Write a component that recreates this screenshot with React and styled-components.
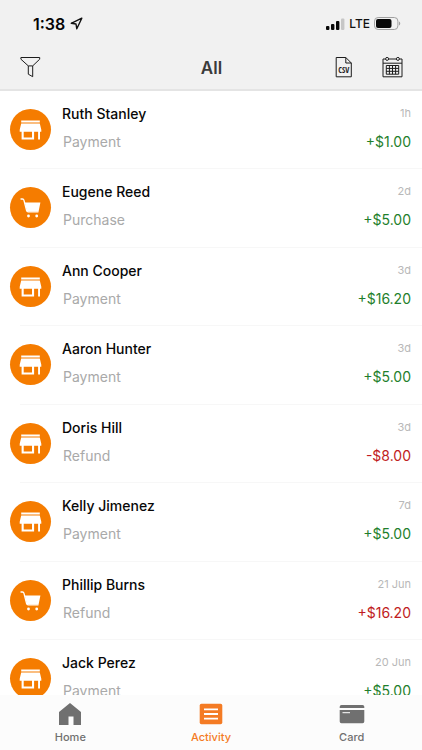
import React from "react";
import styled, { createGlobalStyle } from "styled-components";

const GlobalStyle = createGlobalStyle`
  *, *::before, *::after { box-sizing: border-box; }
  body {
    margin: 0;
    background: #fff;
    font-family: Inter, Roboto, "Liberation Sans", sans-serif;
    -webkit-font-smoothing: antialiased;
  }
  h1, h2, p, ul { margin: 0; padding: 0; }
  button { border: 0; padding: 0; background: none; color: inherit; font: inherit; cursor: pointer; }
  svg { display: block; }
`;

const Screen = styled.div`
  display: flex;
  flex-direction: column;
  height: 100vh;
`;

const Header = styled.header`
  flex: none;
  background: #f1f1f1;
  border-bottom: 2px solid #e4e4e4;
`;

const StatusBar = styled.div`
  display: flex;
  justify-content: space-between;
  align-items: center;
  height: 47px;
  padding: 0 21px 0 33px;
`;

const StatusGroup = styled.div`
  display: flex;
  align-items: center;
  gap: ${({ $gap }) => $gap}px;
`;

const Clock = styled.time`
  font-size: 16px;
  line-height: 20px;
  font-weight: 600;
  color: #050505;
`;

const Network = styled.span`
  font-size: 12px;
  line-height: 16px;
  font-weight: 500;
  color: #111;
`;

const TitleBar = styled.div`
  display: grid;
  grid-template-columns: 1fr auto 1fr;
  align-items: center;
  height: 42px;
  padding: 0 19px 0 20px;
`;

const Title = styled.h1`
  font-size: 17px;
  line-height: 24px;
  font-weight: 600;
  color: #3a3a3a;
`;

const Actions = styled.div`
  display: flex;
  justify-content: flex-end;
  gap: 30px;
`;

const IconButton = styled.button`
  display: block;
  justify-self: start;
`;

const List = styled.ul`
  flex: 1;
  min-height: 0;
  overflow-y: auto;
  scrollbar-width: none;
  list-style: none;
`;

const Row = styled.li`
  display: flex;
  gap: 11px;
  height: 78px;
  margin-left: 20px;
  border-bottom: 1px solid #f7f7f7;
  &:nth-child(even) { height: 79px; }
`;

const Avatar = styled.span`
  flex: none;
  display: grid;
  place-items: center;
  width: 41px;
  height: 41px;
  margin: 18px 0 0 -10px;
  border-radius: 50%;
  background: #f57c00;
`;

const RowBody = styled.div`
  flex: 1;
  display: grid;
  grid-template-columns: 1fr auto;
  grid-template-rows: 20px 20px;
  row-gap: 8px;
  padding: 13px 11px 0 0;
`;

const Name = styled.h2`
  font-size: 14px;
  line-height: 20px;
  font-weight: 500;
  color: #080808;
`;

const When = styled.span`
  font-size: 11px;
  line-height: 18px;
  text-align: right;
  color: #b8b8b8;
`;

const Kind = styled.p`
  padding-left: 1px;
  font-size: 14px;
  line-height: 20px;
  color: #a9a9a9;
`;

const Amount = styled.span`
  font-size: 14px;
  line-height: 20px;
  font-weight: 400;
  text-align: right;
  color: ${({ $negative }) => ($negative ? "#c01c22" : "#1f7f2c")};
`;

const TabBar = styled.nav`
  flex: none;
  display: grid;
  grid-template-columns: repeat(3, 1fr);
  height: 55px;
  background: #fcfcfc;
`;

const Tab = styled.button`
  && {
    display: flex;
    flex-direction: column;
    align-items: center;
    gap: 3px;
    padding-top: 6px;
    font-size: 11px;
    line-height: 14px;
    font-weight: 500;
    color: ${({ $active }) => ($active ? "#f47b24" : "#707070")};
  }
`;

const LocationIcon = () => (
  <svg width="13" height="13" viewBox="0 0 13 13" fill="none" stroke="#111" strokeWidth="1.4" strokeLinejoin="round" aria-hidden="true">
    <path d="M11.8 1.2 1.2 6.3 6 7l.8 4.8z" />
  </svg>
);

const SignalIcon = () => (
  <svg width="19" height="12" viewBox="0 0 19 12" aria-label="Signal strength">
    <rect x="0" y="8" width="3.4" height="4" rx="1" fill="#080808" />
    <rect x="5" y="6" width="3.4" height="6" rx="1" fill="#080808" />
    <rect x="10" y="3" width="3.4" height="9" rx="1" fill="#080808" />
    <rect x="15" y="0.5" width="3.4" height="11.5" rx="1" fill="#c6c6c6" />
  </svg>
);

const BatteryIcon = () => (
  <svg width="27" height="13" viewBox="0 0 27 13" aria-label="Battery">
    <rect x="0.5" y="0.5" width="23.4" height="12" rx="3.6" fill="none" stroke="#a0a0a0" />
    <rect x="2" y="2" width="15.5" height="9" rx="2" fill="#080808" />
    <path d="M25 4.4c1.7.7 1.7 3.5 0 4.2z" fill="#a0a0a0" />
  </svg>
);

const FilterIcon = () => (
  <svg width="21" height="22" viewBox="0 1 21 22" fill="none" stroke="#1c1c1c" strokeWidth="1" strokeLinejoin="round" aria-hidden="true">
    <path d="M.9 1.5h18.8v1.7l-7 6.7v10.8l-4.400-2.5V9.900L.9 3.200z" />
    <path d="M8.300 9.900h4.400" />
  </svg>
);

const CsvIcon = () => (
  <svg width="17" height="22" viewBox="0 1 17 22" fill="none" stroke="#1c1c1c" strokeWidth="1" aria-hidden="true">
    <path d="M1.200 1.500h9.600l5.500 5.500v13.800H1.200z" />
    <path d="M10.800 1.500V7h5.500" />
    <text x="8.800" y="17" textAnchor="middle" fill="#1c1c1c" stroke="none" fontFamily="'Liberation Sans Narrow', 'Open Sans Condensed', 'DejaVu Sans Condensed', sans-serif" fontSize="8" fontWeight="700">CSV</text>
  </svg>
);

const CalendarIcon = () => (
  <svg width="21" height="22" viewBox="0 1 21 22" fill="none" stroke="#1c1c1c" strokeWidth="1" aria-hidden="true">
    <path d="M3.600 3H1v17.800h19V3h-2.600M6.600 3h7.800M1 7.200h19" />
    <circle cx="5.100" cy="2.900" r="1.500" />
    <circle cx="15.900" cy="2.900" r="1.500" />
    <path d="M4.300 9.500h12.400v8.700H4.300zM7.400 9.500v8.700M10.500 9.500v8.700M13.600 9.500v8.700M4.300 12.400h12.400M4.300 15.300h12.400" />
  </svg>
);

const StoreIcon = () => (
  <svg width="23" height="20" viewBox="0 0 23 20" fill="#fff" aria-hidden="true">
    <path d="M2.200.5h18.600v2H2.200z" />
    <path d="M2.200 3.500h18.600l1.500 6.300v1.900h-1.300v7.800h-1.900v-7.800h-4v7.800H2.600v-7.800H.7V9.800zM4.700 11.700v5.800h8.300v-5.800z" fillRule="evenodd" />
  </svg>
);

const CartIcon = () => (
  <svg width="21" height="20" viewBox="0 0 21 20" fill="#fff" aria-hidden="true">
    <path d="M1 1h1.500c.8 0 1.200.4 1.400 1.200l2.700 10.400c.2.800.7 1.200 1.500 1.200h10" fill="none" stroke="#fff" strokeWidth="1.3" strokeLinecap="round" />
    <path d="M4.800 4.600h15.600l-1.700 8.300c-.1.500-.4.700-.9.700H7z" />
    <circle cx="8.500" cy="18" r="1.4" />
    <circle cx="16.700" cy="18" r="1.4" />
  </svg>
);

const HomeIcon = () => (
  <svg width="24" height="26" viewBox="0 0 24 26" fill="currentColor" aria-hidden="true">
    <path d="M12 2 23 11v13h-7.500v-8.500h-5V24H1V11z" />
  </svg>
);

const ActivityIcon = () => (
  <svg width="24" height="26" viewBox="0 0 24 26" aria-hidden="true">
    <rect x="0.7" y="2.7" width="22.6" height="20.6" rx="1.8" fill="currentColor" />
    <path d="M5 8.300h14M5 13h14M5 17.700h14" stroke="#fff" strokeWidth="1.8" />
  </svg>
);

const CardIcon = () => (
  <svg width="26" height="26" viewBox="0 0 26 26" fill="currentColor" aria-hidden="true">
    <path d="M2.500 4h21A1.800 1.800 0 0 1 25.300 5.800V7H.7V5.800A1.800 1.800 0 0 1 2.500 4z" />
    <path d="M.7 9h24.600v11.500a1.800 1.800 0 0 1-1.800 1.800h-21a1.800 1.800 0 0 1-1.800-1.800z" />
    <path d="M3.500 11.700h7.500" stroke="#fff" strokeWidth="1" />
  </svg>
);

const transactions = [
  { name: "Ruth Stanley", kind: "Payment", when: "1h", amount: "+$1.00" },
  { name: "Eugene Reed", kind: "Purchase", when: "2d", amount: "+$5.00", cart: true },
  { name: "Ann Cooper", kind: "Payment", when: "3d", amount: "+$16.20" },
  { name: "Aaron Hunter", kind: "Payment", when: "3d", amount: "+$5.00" },
  { name: "Doris Hill", kind: "Refund", when: "3d", amount: "-$8.00", negative: true },
  { name: "Kelly Jimenez", kind: "Payment", when: "7d", amount: "+$5.00" },
  { name: "Phillip Burns", kind: "Refund", when: "21 Jun", amount: "+$16.20", negative: true, cart: true },
  { name: "Jack Perez", kind: "Payment", when: "20 Jun", amount: "+$5.00" },
];

const tabs = [
  { label: "Home", Icon: HomeIcon },
  { label: "Activity", Icon: ActivityIcon, active: true },
  { label: "Card", Icon: CardIcon },
];

export default function App() {
  return (
    <Screen>
      <GlobalStyle />
      <Header>
        <StatusBar>
          <StatusGroup $gap={5}>
            <Clock>1:38</Clock>
            <LocationIcon />
          </StatusGroup>
          <StatusGroup $gap={4}>
            <SignalIcon />
            <Network>LTE</Network>
            <BatteryIcon />
          </StatusGroup>
        </StatusBar>
        <TitleBar>
          <IconButton aria-label="Filter"><FilterIcon /></IconButton>
          <Title>All</Title>
          <Actions>
            <IconButton aria-label="Export CSV"><CsvIcon /></IconButton>
            <IconButton aria-label="Choose dates"><CalendarIcon /></IconButton>
          </Actions>
        </TitleBar>
      </Header>
      <List>
        {transactions.map((t) => (
          <Row key={t.name}>
            <Avatar>{t.cart ? <CartIcon /> : <StoreIcon />}</Avatar>
            <RowBody>
              <Name>{t.name}</Name>
              <When>{t.when}</When>
              <Kind>{t.kind}</Kind>
              <Amount $negative={t.negative}>{t.amount}</Amount>
            </RowBody>
          </Row>
        ))}
      </List>
      <TabBar>
        {tabs.map(({ label, Icon, active }) => (
          <Tab key={label} $active={active} aria-current={active ? "page" : undefined}>
            <Icon />
            {label}
          </Tab>
        ))}
      </TabBar>
    </Screen>
  );
}
